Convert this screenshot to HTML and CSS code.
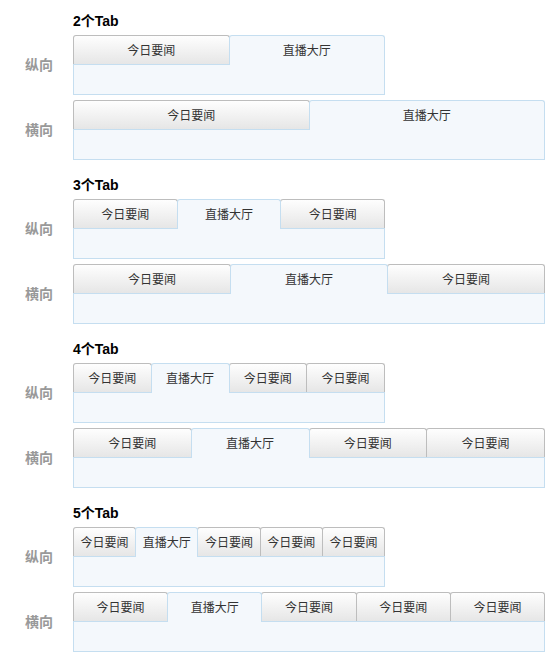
FILE: index.html
```html
<!DOCTYPE html>
<html lang="zh-CN">
<head>
<meta charset="utf-8">
<title>Tab</title>
<link rel="stylesheet" href="styles.css">
</head>
<body>
<section class="group">
  <h2 class="group-title">2个Tab</h2>
  <div class="row">
    <div class="row-label">纵向</div>
    <div class="tabbox narrow">
      <div class="tabs">
        <div class="tab">今日要闻</div>
        <div class="tab active">直播大厅</div>
      </div>
      <div class="panel"></div>
    </div>
  </div>
  <div class="row">
    <div class="row-label">横向</div>
    <div class="tabbox wide">
      <div class="tabs">
        <div class="tab">今日要闻</div>
        <div class="tab active">直播大厅</div>
      </div>
      <div class="panel"></div>
    </div>
  </div>
</section>

<section class="group">
  <h2 class="group-title">3个Tab</h2>
  <div class="row">
    <div class="row-label">纵向</div>
    <div class="tabbox narrow">
      <div class="tabs">
        <div class="tab">今日要闻</div>
        <div class="tab active">直播大厅</div>
        <div class="tab">今日要闻</div>
      </div>
      <div class="panel"></div>
    </div>
  </div>
  <div class="row">
    <div class="row-label">横向</div>
    <div class="tabbox wide">
      <div class="tabs">
        <div class="tab">今日要闻</div>
        <div class="tab active">直播大厅</div>
        <div class="tab">今日要闻</div>
      </div>
      <div class="panel"></div>
    </div>
  </div>
</section>

<section class="group">
  <h2 class="group-title">4个Tab</h2>
  <div class="row">
    <div class="row-label">纵向</div>
    <div class="tabbox narrow">
      <div class="tabs">
        <div class="tab">今日要闻</div>
        <div class="tab active">直播大厅</div>
        <div class="tab">今日要闻</div>
        <div class="tab">今日要闻</div>
      </div>
      <div class="panel"></div>
    </div>
  </div>
  <div class="row">
    <div class="row-label">横向</div>
    <div class="tabbox wide">
      <div class="tabs">
        <div class="tab">今日要闻</div>
        <div class="tab active">直播大厅</div>
        <div class="tab">今日要闻</div>
        <div class="tab">今日要闻</div>
      </div>
      <div class="panel"></div>
    </div>
  </div>
</section>

<section class="group">
  <h2 class="group-title">5个Tab</h2>
  <div class="row">
    <div class="row-label">纵向</div>
    <div class="tabbox narrow">
      <div class="tabs">
        <div class="tab">今日要闻</div>
        <div class="tab active">直播大厅</div>
        <div class="tab">今日要闻</div>
        <div class="tab">今日要闻</div>
        <div class="tab">今日要闻</div>
      </div>
      <div class="panel"></div>
    </div>
  </div>
  <div class="row">
    <div class="row-label">横向</div>
    <div class="tabbox wide">
      <div class="tabs">
        <div class="tab">今日要闻</div>
        <div class="tab active">直播大厅</div>
        <div class="tab">今日要闻</div>
        <div class="tab">今日要闻</div>
        <div class="tab">今日要闻</div>
      </div>
      <div class="panel"></div>
    </div>
  </div>
</section>
</body>
</html>
```

FILE: styles.css
```css
* { box-sizing: border-box; }

body {
  margin: 0;
  padding: 13px 0 0 8px;
  background: #fff;
  font-family: "Liberation Sans", "Noto Sans CJK SC", sans-serif;
  color: #333;
}

.group {
  margin-bottom: 17px;
}

.group-title {
  margin: 0 0 6px 65px;
  height: 16px;
  font-size: 14px;
  line-height: 16px;
  font-weight: bold;
  color: #000;
}

.row {
  display: flex;
  align-items: center;
  height: 60px;
}

.row + .row {
  margin-top: 5px;
}

.row-label {
  width: 65px;
  padding-right: 3px;
  padding-bottom: 2px;
  text-align: center;
  font-family: "Noto Sans CJK SC", sans-serif;
  font-size: 14px;
  font-weight: bold;
  color: #999;
}

.tabbox {
  display: flex;
  flex-direction: column;
  height: 60px;
}

.tabbox.narrow { width: 312px; }
.tabbox.wide { width: 472px; }

.tabs {
  display: flex;
  align-items: flex-start;
  height: 29px;
}

.tab {
  flex: 1 1 0;
  min-width: 0;
  height: 29px;
  border: 1px solid #bdbdbd;
  border-bottom: 0;
  border-radius: 3px 3px 0 0;
  background: linear-gradient(#fefefe, #e6e6e6);
  font-family: "Noto Sans CJK SC", sans-serif;
  font-size: 12px;
  line-height: 28px;
  text-align: center;
  white-space: nowrap;
  color: #333;
}

.tab + .tab {
  margin-left: -1px;
}

.tab.active {
  position: relative;
  z-index: 1;
  height: 30px;
  border-color: #c5def0;
  background: #f4f8fc;
}

.panel {
  height: 31px;
  border: 1px solid #c5def0;
  background: #f4f8fc;
}
```
